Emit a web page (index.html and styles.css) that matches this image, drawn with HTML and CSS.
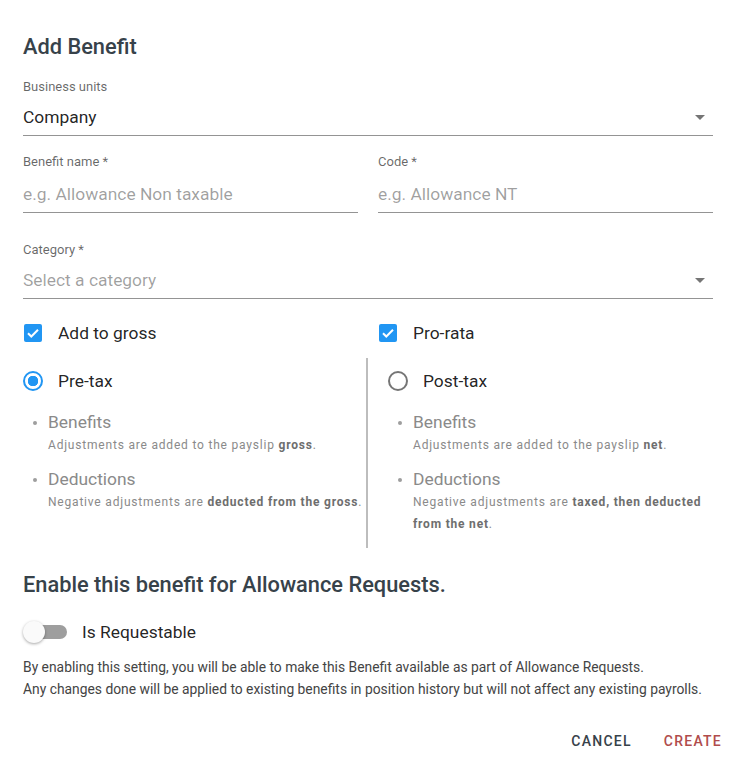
FILE: index.html
```html
<!DOCTYPE html>
<html lang="en">
<head>
  <meta charset="UTF-8">
  <meta name="viewport" content="width=device-width, initial-scale=1.0">
  <title>Add Benefit</title>
  <link rel="stylesheet" href="styles.css">
</head>
<body>
  <div class="dialog">
    <h1 class="title">Add Benefit</h1>

    <!-- Business units -->
    <div class="field">
      <label class="field-label">Business units</label>
      <div class="field-input select">
        <span class="value">Company</span>
        <span class="caret"></span>
      </div>
    </div>

    <div class="field-row">
      <div class="field field-text">
        <label class="field-label">Benefit name *</label>
        <div class="field-input">
          <span class="placeholder">e.g. Allowance Non taxable</span>
        </div>
      </div>
      <div class="field field-text">
        <label class="field-label">Code *</label>
        <div class="field-input">
          <span class="placeholder">e.g. Allowance NT</span>
        </div>
      </div>
    </div>

    <div class="field field-category">
      <label class="field-label">Category *</label>
      <div class="field-input select">
        <span class="placeholder">Select a category</span>
        <span class="caret"></span>
      </div>
    </div>

    <div class="check-row">
      <div class="check">
        <span class="checkbox">
          <svg viewBox="0 0 18 18" width="18" height="18"><path d="M4 9.2l3.3 3.3L14 5.8" fill="none" stroke="#fff" stroke-width="2"/></svg>
        </span>
        <span class="check-label">Add to gross</span>
      </div>
      <div class="check">
        <span class="checkbox">
          <svg viewBox="0 0 18 18" width="18" height="18"><path d="M4 9.2l3.3 3.3L14 5.8" fill="none" stroke="#fff" stroke-width="2"/></svg>
        </span>
        <span class="check-label">Pro-rata</span>
      </div>
    </div>

    <div class="tax-options">
      <div class="tax-col">
        <div class="radio-row">
          <span class="radio radio-on"></span>
          <span class="radio-label">Pre-tax</span>
        </div>
        <ul class="notes">
          <li>
            <span class="note-title">Benefits</span>
            <span class="note-text">Adjustments are added to the payslip <b>gross</b>.</span>
          </li>
          <li>
            <span class="note-title">Deductions</span>
            <span class="note-text">Negative adjustments are <b>deducted from the gross</b>.</span>
          </li>
        </ul>
      </div>
      <div class="tax-col tax-col-right">
        <div class="radio-row">
          <span class="radio"></span>
          <span class="radio-label">Post-tax</span>
        </div>
        <ul class="notes">
          <li>
            <span class="note-title">Benefits</span>
            <span class="note-text">Adjustments are added to the payslip <b>net</b>.</span>
          </li>
          <li>
            <span class="note-title">Deductions</span>
            <span class="note-text">Negative adjustments are <b>taxed, then deducted from the net</b>.</span>
          </li>
        </ul>
      </div>
    </div>

    <h2 class="subtitle">Enable this benefit for Allowance Requests.</h2>

    <div class="switch-row">
      <span class="switch"><span class="switch-thumb"></span></span>
      <span class="switch-label">Is Requestable</span>
    </div>

    <p class="hint">
      By enabling this setting, you will be able to make this Benefit available as part of Allowance Requests.<br>
      Any changes done will be applied to existing benefits in position history but will not affect any existing payrolls.
    </p>

    <div class="actions">
      <button class="btn btn-cancel">Cancel</button>
      <button class="btn btn-create">Create</button>
    </div>
  </div>
</body>
</html>
```

FILE: styles.css
```css
/* Reset default styles */
* {
  margin: 0;
  padding: 0;
  box-sizing: border-box;
}

body {
  font-family: Roboto, 'Liberation Sans', sans-serif;
  background-color: #fff;
  color: rgba(0, 0, 0, 0.87);
}

.dialog {
  width: 735px;
  padding: 33px 22px 0 23px;
}

.title {
  font-size: 21.8px;
  font-weight: 500;
  line-height: 28px;
  color: #37424a;
}

/* Form fields */
.field {
  margin-top: 18px;
}

.field-label {
  display: block;
  font-size: 13px;
  line-height: 16px;
  color: rgba(0, 0, 0, 0.6);
}

.field-input {
  display: flex;
  align-items: center;
  margin-top: 2px;
  padding: 8px 0 6px;
  border-bottom: 1px solid rgba(0, 0, 0, 0.42);
  font-size: 17.4px;
  line-height: 24px;
}

.field-text .field-input {
  margin-top: 4px;
}

.field-category {
  margin-top: 29px;
}

.value {
  flex: 1;
  color: rgba(0, 0, 0, 0.87);
}

.placeholder {
  flex: 1;
  color: rgba(0, 0, 0, 0.38);
}

.caret {
  width: 0;
  height: 0;
  margin-right: 8px;
  border-left: 5px solid transparent;
  border-right: 5px solid transparent;
  border-top: 5px solid rgba(0, 0, 0, 0.54);
}

.field-row {
  display: grid;
  grid-template-columns: 1fr 1fr;
  gap: 20px;
}

/* Checkboxes */
.check-row {
  display: grid;
  grid-template-columns: 1fr 1fr;
  gap: 20px;
  margin-top: 16px;
}

.check {
  display: flex;
  align-items: center;
  height: 36px;
}

.checkbox {
  width: 18px;
  height: 18px;
  margin-left: 1px;
  border-radius: 2px;
  background: #2196f3;
  display: flex;
}

.check-label {
  margin-left: 16px;
  font-size: 17.4px;
  color: rgba(0, 0, 0, 0.87);
}

/* Pre-tax / Post-tax */
.tax-options {
  display: grid;
  grid-template-columns: 343px 1fr;
  margin-top: 7px;
}

.tax-col-right {
  border-left: 2px solid #bdbdbd;
  padding-left: 20px;
  padding-bottom: 13px;
}

.radio-row {
  display: flex;
  align-items: center;
  height: 36px;
  margin-top: 5px;
}

.radio {
  width: 20px;
  height: 20px;
  border-radius: 50%;
  border: 2px solid rgba(0, 0, 0, 0.54);
}

.radio-on {
  border-color: #2196f3;
  background: radial-gradient(circle, #2196f3 5px, transparent 5.5px);
}

.radio-label {
  margin-left: 15px;
  font-size: 17.4px;
  color: rgba(0, 0, 0, 0.87);
}

.notes {
  list-style: none;
  margin-top: 11px;
  padding-left: 25px;
}

.notes li {
  position: relative;
}

.notes li + li {
  margin-top: 11px;
}

.notes li::before {
  content: '';
  position: absolute;
  left: -15px;
  top: 11px;
  width: 4px;
  height: 4px;
  border-radius: 50%;
  background: #9e9e9e;
}

.note-title {
  display: block;
  font-size: 17.4px;
  line-height: 24px;
  color: #8a8a8a;
}

.note-text {
  display: block;
  font-size: 12px;
  letter-spacing: 0.8px;
  line-height: 22px;
  color: #8a8a8a;
}

.note-text b {
  font-weight: 700;
  color: #6e6e6e;
}

/* Allowance requests */
.subtitle {
  margin-top: 23px;
  font-size: 21.8px;
  font-weight: 500;
  line-height: 28px;
  color: #37424a;
}

.switch-row {
  display: flex;
  align-items: center;
  height: 36px;
  margin-top: 15px;
}

.switch {
  position: relative;
  width: 36px;
  height: 14px;
  margin-left: 8px;
  border-radius: 7px;
  background: #9e9e9e;
}

.switch-thumb {
  position: absolute;
  left: -8px;
  top: -4px;
  width: 22px;
  height: 22px;
  border-radius: 50%;
  background: #fafafa;
  box-shadow: 0 1px 3px rgba(0, 0, 0, 0.35);
}

.switch-label {
  margin-left: 15px;
  font-size: 17.4px;
  color: rgba(0, 0, 0, 0.87);
}

.hint {
  margin-top: 6px;
  font-size: 13.85px;
  line-height: 22px;
  color: #444;
}

.actions {
  display: flex;
  justify-content: flex-end;
  margin-top: 23px;
  margin-right: -25px;
}

.btn {
  height: 36px;
  padding: 0 16px;
  border: none;
  background: none;
  font-family: Roboto, 'Liberation Sans', sans-serif;
  font-size: 14px;
  font-weight: 500;
  letter-spacing: 1.25px;
  text-transform: uppercase;
  cursor: pointer;
}

.btn-cancel {
  color: #37424a;
}

.btn-create {
  color: #b04c4c;
}
```
